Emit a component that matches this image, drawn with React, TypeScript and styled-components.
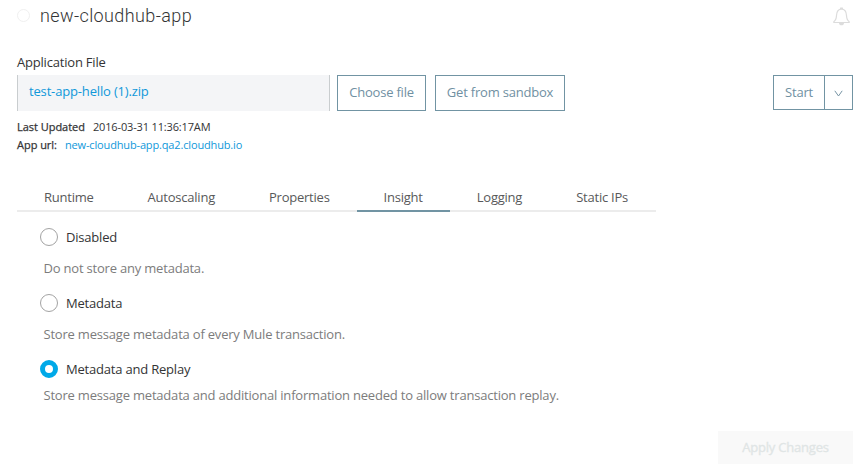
import React, { useState } from "react";
import styled, { createGlobalStyle } from "styled-components";

const GlobalStyle = createGlobalStyle`
  * { box-sizing: border-box; }
  body {
    margin: 0;
    background: #fff;
    color: #333435;
    font: 13px/18px "Open Sans", "Noto Sans", sans-serif;
    letter-spacing: -0.2px;
  }
  button { font: inherit; letter-spacing: inherit; cursor: pointer; }
  a { color: #0f98da; text-decoration: none; }
`;

const Page = styled.main`
  display: flex;
  flex-direction: column;
  height: 476px;
  padding: 0 13px 12px 17px;
  overflow: hidden;
  white-space: nowrap;
`;

const Header = styled.header`
  display: flex;
  align-items: center;
  height: 32px;
`;

const StatusDot = styled.span`
  width: 13px;
  height: 13px;
  margin: 0 10px 2px 0;
  border: 1px solid #f0f0f0;
  border-radius: 50%;
`;

const Title = styled.h1`
  flex: 1;
  margin: 0;
  font: 300 18px/24px Roboto, sans-serif;
  letter-spacing: 0.39px;
`;

const BellIcon = styled.svg`
  width: 17px;
  height: 19px;
  margin-right: 3px;
`;

const FieldLabel = styled.div`
  margin-top: 21px;
  height: 22px;
`;

const FileRow = styled.div`
  display: flex;
  height: 36px;
`;

const FileName = styled.div`
  width: 313px;
  margin-right: 7px;
  padding: 7px 11px;
  border: solid #c9cdcf;
  border-width: 0 1px;
  background: #f4f5f7;
  letter-spacing: -0.16px;
`;

const OutlineButton = styled.button<{ $width: number }>`
  width: ${(p) => p.$width}px;
  height: 36px;
  margin-right: 9px;
  padding: 0 0 2px;
  border: 1px solid #7194a3;
  background: #fff;
  color: #7090a2;
`;

const SplitButton = styled.div`
  display: flex;
  width: 80px;
  height: 35px;
  margin-left: auto;
  border: 1px solid #7194a3;
`;

const SplitPart = styled.button<{ $width: number; $divided?: boolean }>`
  display: flex;
  align-items: center;
  justify-content: center;
  width: ${(p) => p.$width}px;
  padding: ${(p) => (p.$divided ? "2px 0 0" : "0 0 1px")};
  border: 0 solid #7194a3;
  border-left-width: ${(p) => (p.$divided ? 1 : 0)}px;
  background: #fff;
  color: #7090a2;
`;

const Details = styled.dl`
  margin: 7px 0 0;
  font-size: 11px;
  letter-spacing: -0.15px;
`;

const Detail = styled.div`
  display: flex;
  height: 18px;
  gap: 8px;
`;

const Term = styled.dt`
  letter-spacing: -0.03px;
  -webkit-text-stroke: 0.25px currentColor;
`;

const Value = styled.dd`
  margin: 0;
`;

const Tabs = styled.nav`
  display: flex;
  width: 639px;
  height: 26px;
  margin-top: 32px;
  box-shadow: inset 0 -2px #ececec;
`;

const Tab = styled.button<{ $active: boolean }>`
  padding: 0 27px 2px;
  border: 0;
  border-bottom: 2px solid ${(p) => (p.$active ? "#7194a3" : "transparent")};
  background: none;
  color: #58595a;
  letter-spacing: -0.23px;
`;

const Options = styled.div`
  padding: 16px 0 0 23px;
`;

const Option = styled.label`
  display: flex;
  align-items: center;
  height: 18px;
  gap: 8px;
`;

const Radio = styled.input`
  appearance: none;
  width: 18px;
  height: 18px;
  margin: 0;
  border: 1px solid #a3a3a3;
  border-radius: 50%;
  background: #fff;
  &:checked { border: 5px solid #00a9e8; }
`;

const Description = styled.p<{ $last: boolean }>`
  margin: ${(p) => (p.$last ? "8px 0 0 3.5px" : "13px 0 17px 3.5px")};
  color: #7c7c7c;
`;

const ApplyButton = styled.button`
  width: 135px;
  height: 33px;
  margin: auto 0 0 auto;
  padding: 0 0 1px;
  border: 0;
  background: #f9f9f9;
  color: #e0e5e5;
  -webkit-text-stroke: 0.3px currentColor;
`;

const tabs = ["Runtime", "Autoscaling", "Properties", "Insight", "Logging", "Static IPs"];

const options = [
  { name: "Disabled", text: "Do not store any metadata." },
  { name: "Metadata", text: "Store message metadata of every Mule transaction." },
  {
    name: "Metadata and Replay",
    text: "Store message metadata and additional information needed to allow transaction replay.",
  },
];

export default function App() {
  const [tab, setTab] = useState("Insight");
  const [choice, setChoice] = useState("Metadata and Replay");

  return (
    <Page>
      <GlobalStyle />
      <Header>
        <StatusDot />
        <Title>new-cloudhub-app</Title>
        <BellIcon viewBox="0 0 17 19" fill="none" stroke="#dcdcdc" strokeWidth="1.2" strokeLinejoin="round">
          <path d="M7.5 2.2V1.1h2v1.1M.8 15.5v-.8c1.900-1.200 2.500-2.700 2.700-6.200C3.700 4.600 5.200 2.200 8.500 2.200s4.800 2.400 5 6.300c.2 3.500.8 5 2.700 6.200v.8z" />
          <path d="M6 16h5c0 1.400-1 2.300-2.500 2.300S6 17.400 6 16z" fill="#dcdcdc" stroke="none" />
        </BellIcon>
      </Header>

      <FieldLabel>Application File</FieldLabel>
      <FileRow>
        <FileName><a href="#file">test-app-hello (1).zip</a></FileName>
        <OutlineButton $width={89}>Choose file</OutlineButton>
        <OutlineButton $width={130}>Get from sandbox</OutlineButton>
        <SplitButton>
          <SplitPart $width={50}>Start</SplitPart>
          <SplitPart $width={28} $divided aria-label="More actions">
            <svg width="9" height="7" viewBox="0 0 9 7" fill="none" stroke="#7694a4">
              <path d="M.8.8 4.500 6 8.200.8" />
            </svg>
          </SplitPart>
        </SplitButton>
      </FileRow>

      <Details>
        <Detail>
          <Term>Last Updated</Term>
          <Value>2016-03-31 11:36:17AM</Value>
        </Detail>
        <Detail>
          <Term>App url:</Term>
          <Value><a href="#app">new-cloudhub-app.qa2.cloudhub.io</a></Value>
        </Detail>
      </Details>

      <Tabs>
        {tabs.map((name) => (
          <Tab key={name} $active={name === tab} onClick={() => setTab(name)}>{name}</Tab>
        ))}
      </Tabs>

      <Options>
        {options.map(({ name, text }, i) => (
          <React.Fragment key={name}>
            <Option>
              <Radio type="radio" name="insight" checked={name === choice} onChange={() => setChoice(name)} />
              {name}
            </Option>
            <Description $last={i === options.length - 1}>{text}</Description>
          </React.Fragment>
        ))}
      </Options>

      <ApplyButton disabled>Apply Changes</ApplyButton>
    </Page>
  );
}
